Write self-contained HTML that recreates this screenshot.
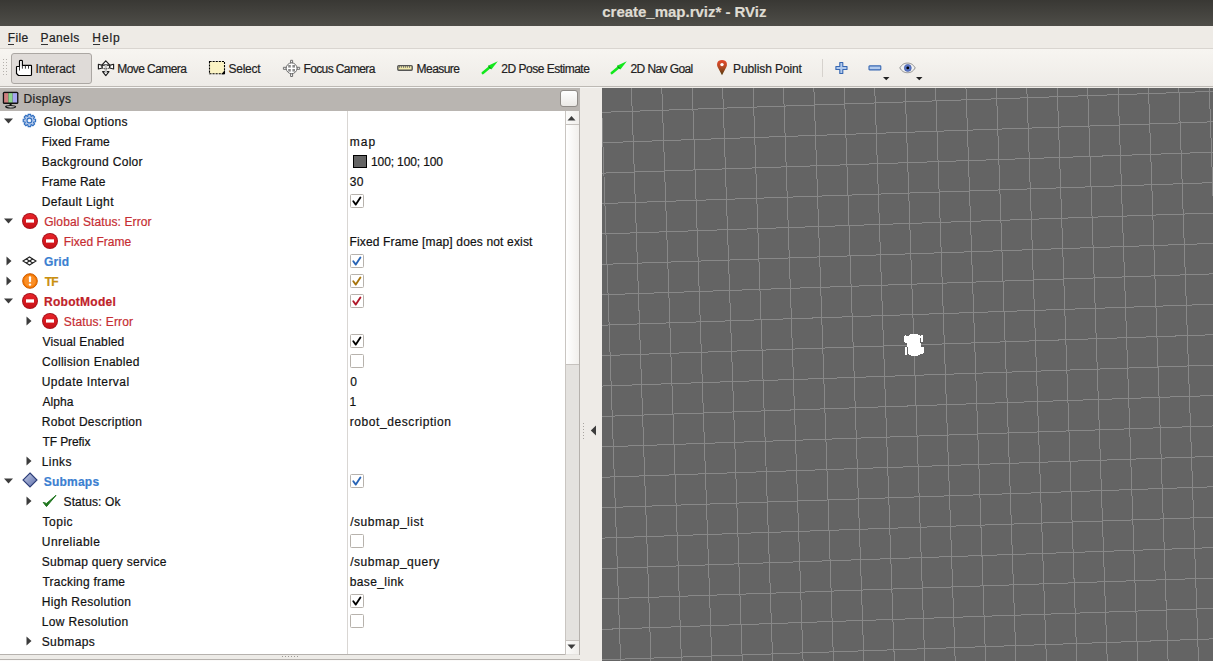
<!DOCTYPE html>
<html><head><meta charset="utf-8"><style>
*{box-sizing:border-box}
html,body{margin:0;padding:0}
body{width:1213px;height:661px;overflow:hidden;position:relative;background:#eeebe7;font-family:"Liberation Sans", sans-serif}
.t{position:absolute;white-space:pre;-webkit-text-stroke:0.2px currentColor}
.a{position:absolute;display:block}
</style></head><body>
<!-- title bar -->
<div class="a" style="left:0;top:0;width:1213px;height:26px;background:linear-gradient(#393834,#4e4d48)"></div>
<!-- menubar -->
<div class="a" style="left:0;top:26px;width:1213px;height:22px;background:#eeebe6"></div>
<div class="a" style="left:0;top:48px;width:1213px;height:1px;background:#d9d5d0"></div>
<div class="a" style="left:8px;top:44px;width:6px;height:1px;background:#333"></div>
<div class="a" style="left:41px;top:44px;width:7px;height:1px;background:#333"></div>
<div class="a" style="left:93px;top:44px;width:7px;height:1px;background:#333"></div>
<!-- toolbar -->
<div class="a" style="left:0;top:49px;width:1213px;height:37px;background:linear-gradient(#f7f5f1,#eeebe7)"></div>
<div class="a" style="left:0;top:86px;width:1213px;height:1px;background:#bdb9b4"></div>
<div class="a" style="left:0;top:87px;width:602px;height:1px;background:#f7f6f4"></div>
<svg class="a" style="left:2px;top:58px" width="6" height="20"><g fill="#b5b1ad"><rect x="1" y="1" width="1" height="1"/><rect x="4" y="1" width="1" height="1"/><rect x="1" y="4" width="1" height="1"/><rect x="4" y="4" width="1" height="1"/><rect x="1" y="7" width="1" height="1"/><rect x="4" y="7" width="1" height="1"/><rect x="1" y="10" width="1" height="1"/><rect x="4" y="10" width="1" height="1"/><rect x="1" y="13" width="1" height="1"/><rect x="4" y="13" width="1" height="1"/><rect x="1" y="16" width="1" height="1"/><rect x="4" y="16" width="1" height="1"/></g></svg>
<div class="a" style="left:11px;top:53px;width:81px;height:31px;background:#dfdbd8;border:1px solid #aba7a3;border-radius:3px"></div>
<svg class="a" style="left:12px;top:56px" width="24" height="24" viewBox="0 0 24 24"><path d="M7.5 10.5V5Q7.5 4.3 8.95 4.3Q10.4 4.3 10.4 5V9.4H19Q19.5 9.4 19.5 10V18.5Q19.5 19.5 18.5 19.5H6.5L4.5 17.5V11Q4.5 10.5 5 10.5Z" fill="#fff" stroke="#000" stroke-width="1.15" stroke-linejoin="round"/><path d="M7.5 10.5V14.5M10.4 9.6V12.7M13.4 9.6V12.7M16.5 9.6V12.7" stroke="#222" stroke-width="0.9"/></svg>
<svg class="a" style="left:94px;top:56px" width="24" height="24" viewBox="0 0 24 24"><g stroke="#1e1e1e" stroke-width="1.15" stroke-linejoin="round"><path d="M11.8 4.8L7.8 9.2H15.8Z" fill="#fff"/><path d="M4.4 8.2L8.2 9.4V12L4.4 13Z" fill="#fff"/><path d="M19.6 8.2L15.6 9.4V12L19.6 13Z" fill="#fff"/><path d="M8.6 15.6H15L11.8 19.6Z" fill="#fff"/></g><rect x="10.7" y="8.2" width="2.2" height="8" fill="#c4c4c4"/><ellipse cx="11.8" cy="10.7" rx="4.4" ry="2.1" fill="none" stroke="#2a2a2a" stroke-width="1" stroke-dasharray="1.3 0.7"/></svg>
<svg class="a" style="left:205px;top:56px" width="24" height="24" viewBox="0 0 24 24"><rect x="4.5" y="5.5" width="15" height="12.3" fill="#fbf3c4"/><rect x="4.5" y="5.5" width="15" height="12.3" fill="none" stroke="#000" stroke-width="1.1" stroke-dasharray="2.1 1"/><path d="M20 14V18.3H16.3Z" fill="#000"/></svg>
<svg class="a" style="left:280px;top:56px" width="24" height="24" viewBox="0 0 24 24"><g stroke="#6e6e6e" stroke-width="1" fill="#fff" stroke-linejoin="round"><path d="M10.6 4.3H12.6V7H10.6Z"/><path d="M10.6 17.6H12.6V20.5H10.6Z"/><path d="M3.4 11.3H6.2V13.3H3.4Z"/><path d="M17 11.3H19.7V13.3H17Z"/><circle cx="11.6" cy="12.3" r="5.4"/></g><g fill="#8a8a8a"><rect x="8.2" y="9" width="2.6" height="2.6"/><rect x="12.4" y="9" width="2.6" height="2.6"/><rect x="8.2" y="13" width="2.6" height="2.6"/><rect x="12.4" y="13" width="2.6" height="2.6"/></g></svg>
<svg class="a" style="left:393px;top:58px" width="24" height="18" viewBox="0 0 24 18"><rect x="4.8" y="7.6" width="14.4" height="4.6" rx="0.9" fill="#f1e9aa" stroke="#555" stroke-width="1.4"/><path d="M6.4 8V9.8M8.4 8V9.8M10.5 8V9.8M12.4 8V9.8M14.4 8V9.8M16.5 8V9.8" stroke="#666" stroke-width="0.9"/></svg>
<svg class="a" style="left:478px;top:56px" width="24" height="24" viewBox="0 0 24 24"><path d="M4.8 17L12 11" stroke="#12e81c" stroke-width="2.6" stroke-linecap="round"/><path d="M19.8 5.2L10 9.8L13.6 13.2Z" fill="#12e81c"/><path d="M10.4 10.2L13.2 12.8" stroke="#0a6a10" stroke-width="1"/></svg>
<svg class="a" style="left:607px;top:56px" width="24" height="24" viewBox="0 0 24 24"><path d="M4.8 17L12 11" stroke="#12e81c" stroke-width="2.6" stroke-linecap="round"/><path d="M19.8 5.2L10 9.8L13.6 13.2Z" fill="#12e81c"/><path d="M10.4 10.2L13.2 12.8" stroke="#0a6a10" stroke-width="1"/></svg>
<svg class="a" style="left:710px;top:56px" width="24" height="24" viewBox="0 0 24 24"><defs><linearGradient id="pg" x1="0" y1="0" x2="0" y2="1"><stop offset="0" stop-color="#e5472a"/><stop offset="0.45" stop-color="#b84a25"/><stop offset="1" stop-color="#4e3a0c"/></linearGradient></defs><path d="M12 19.3L7.6 11C6.5 8.6 6.8 4 12 4S17.5 8.6 16.4 11Z" fill="url(#pg)"/><circle cx="12" cy="8.6" r="1.7" fill="#fff"/></svg>
<svg class="a" style="left:835px;top:61px" width="14" height="14"><path d="M4.8 1.5H7.8V5.5H12V8.5H7.8V12.5H4.8V8.5H0.9V5.5H4.8Z" fill="#b3cbed" stroke="#3767b2" stroke-width="1.1" stroke-linejoin="round"/></svg>
<svg class="a" style="left:868px;top:65px" width="14" height="6"><rect x="1" y="0.9" width="11.8" height="4" rx="0.6" fill="#b3cbed" stroke="#3767b2" stroke-width="1.1"/></svg>
<svg class="a" style="left:883px;top:77px" width="7" height="4"><path d="M0 0H6.5L3.25 3.2Z" fill="#222"/></svg>
<svg class="a" style="left:899px;top:62px" width="17" height="12"><path d="M0.8 5.9C3 2.2 5.5 1.1 8.5 1.1S14 2.2 16.2 5.9C14 9.6 11.5 10.7 8.5 10.7S3 9.6 0.8 5.9Z" fill="#f2f2f2" stroke="#8c8c8c" stroke-width="1"/><circle cx="8.8" cy="5.9" r="3.5" fill="#5b78c8" stroke="#3b55a0" stroke-width="0.6"/><circle cx="8.8" cy="5.9" r="1.4" fill="#000"/></svg>
<svg class="a" style="left:916px;top:77px" width="7" height="4"><path d="M0 0H6.5L3.25 3.2Z" fill="#222"/></svg>
<div class="a" style="left:822px;top:59px;width:1px;height:18px;background:#d6d2cd"></div>
<!-- displays panel -->
<div class="a" style="left:0;top:88px;width:580px;height:23px;background:#b9b5b1"></div>
<div class="a" style="left:560px;top:90px;width:18px;height:17px;border:1px solid #8f8b87;border-radius:3px;background:linear-gradient(#ffffff,#ebe9e6)"></div>
<div class="a" style="left:0;top:111px;width:580px;height:544px;background:#fff"></div>
<div class="a" style="left:347px;top:111px;width:1px;height:543px;background:#d9d6d3"></div>
<div class="a" style="left:0;top:654px;width:580px;height:1px;background:#b6b2ae"></div>
<div class="a" style="left:0;top:655px;width:580px;height:6px;background:#edebe7"></div>
<div class="a" style="left:0;top:659px;width:580px;height:1px;background:#b6b2ae"></div><div class="a" style="left:0;top:660px;width:580px;height:1px;background:#fbfaf9"></div>
<svg class="a" style="left:282px;top:656px" width="16" height="2"><g fill="#9d9995"><rect x="0" y="0" width="1" height="1"/><rect x="3" y="0" width="1" height="1"/><rect x="6" y="0" width="1" height="1"/><rect x="9" y="0" width="1" height="1"/><rect x="12" y="0" width="1" height="1"/><rect x="15" y="0" width="1" height="1"/></g></svg>
<!-- scrollbar -->
<div class="a" style="left:565px;top:111px;width:15px;height:544px;background:#e4e2df;border-left:1px solid #c9c5c1;border-right:1px solid #b5b1ad"></div>
<div class="a" style="left:566px;top:111px;width:13px;height:14px;background:linear-gradient(90deg,#fbfbfa,#f0eeeb);border-bottom:1px solid #c6c2be"></div>
<svg class="a" style="left:567.3px;top:115px" width="9" height="6"><path d="M0.5 5.5H8.5L4.5 1Z" fill="#3c3c3c"/></svg>
<div class="a" style="left:566px;top:125px;width:13px;height:240px;background:linear-gradient(90deg,#ffffff,#f1efec);border-bottom:1px solid #c6c2be"></div>
<div class="a" style="left:566px;top:640px;width:13px;height:14px;background:linear-gradient(90deg,#fbfbfa,#f0eeeb);border-top:1px solid #c6c2be"></div>
<svg class="a" style="left:567.3px;top:644px" width="9" height="6"><path d="M0.5 0.5H8.5L4.5 5Z" fill="#3c3c3c"/></svg>
<!-- splitter -->
<svg class="a" style="left:583px;top:423px" width="2" height="18"><g fill="#a8a4a0"><rect x="0" y="0" width="1" height="1"/><rect x="0" y="3" width="1" height="1"/><rect x="0" y="6" width="1" height="1"/><rect x="0" y="9" width="1" height="1"/><rect x="0" y="12" width="1" height="1"/><rect x="0" y="15" width="1" height="1"/></g></svg>
<svg class="a" style="left:590px;top:425px" width="7" height="11"><path d="M6 0.5V10.5L0.8 5.5Z" fill="#3c3c3c"/></svg>
<!-- monitor icon -->
<svg class="a" style="left:1.5px;top:91px" width="18" height="18"><rect x="0.8" y="0.8" width="15.6" height="12.2" rx="1.5" fill="#111"/><rect x="2.1" y="2.1" width="4.3" height="9.4" fill="#cf7f7f"/><rect x="6.4" y="2.1" width="4.3" height="9.4" fill="#8dd48d"/><rect x="10.7" y="2.1" width="4.4" height="9.4" fill="#a6a6f0"/><rect x="7.6" y="12.8" width="2" height="2" fill="#111"/><ellipse cx="8.6" cy="15.8" rx="5" ry="1.2" fill="#fff" stroke="#111" stroke-width="1.1"/></svg>
<span class="t" style="left:602.27px;top:4.30px;font-size:15px;line-height:15px;color:#dfdbd2;font-weight:700;letter-spacing:-0.016px">create_map.rviz* - RViz</span>
<span class="t" style="left:7.68px;top:31.54px;font-size:12px;line-height:12px;color:#222;letter-spacing:0.415px">File</span>
<span class="t" style="left:40.46px;top:31.54px;font-size:12px;line-height:12px;color:#222;letter-spacing:0.423px">Panels</span>
<span class="t" style="left:92.29px;top:31.54px;font-size:12px;line-height:12px;color:#222;letter-spacing:0.942px">Help</span>
<span class="t" style="left:35.47px;top:62.74px;font-size:12px;line-height:12px;color:#222;letter-spacing:-0.063px">Interact</span>
<span class="t" style="left:117.27px;top:62.74px;font-size:12px;line-height:12px;color:#222;letter-spacing:-0.570px">Move Camera</span>
<span class="t" style="left:228.58px;top:62.74px;font-size:12px;line-height:12px;color:#222;letter-spacing:-0.273px">Select</span>
<span class="t" style="left:303.45px;top:62.74px;font-size:12px;line-height:12px;color:#222;letter-spacing:-0.611px">Focus Camera</span>
<span class="t" style="left:416.58px;top:62.74px;font-size:12px;line-height:12px;color:#222;letter-spacing:-0.561px">Measure</span>
<span class="t" style="left:501.32px;top:62.74px;font-size:12px;line-height:12px;color:#222;letter-spacing:-0.499px">2D Pose Estimate</span>
<span class="t" style="left:630.54px;top:62.74px;font-size:12px;line-height:12px;color:#222;letter-spacing:-0.597px">2D Nav Goal</span>
<span class="t" style="left:733.01px;top:62.74px;font-size:12px;line-height:12px;color:#222;letter-spacing:-0.091px">Publish Point</span>
<span class="t" style="left:23.59px;top:93.14px;font-size:12px;line-height:12px;color:#222;letter-spacing:0.287px">Displays</span>
<span class="t" style="left:43.87px;top:115.64px;font-size:12px;line-height:12px;color:#111111;letter-spacing:0.328px">Global Options</span>
<span class="t" style="left:41.70px;top:135.64px;font-size:12px;line-height:12px;color:#111111;letter-spacing:0.064px">Fixed Frame</span>
<span class="t" style="left:41.70px;top:155.64px;font-size:12px;line-height:12px;color:#111111;letter-spacing:0.325px">Background Color</span>
<span class="t" style="left:41.70px;top:175.64px;font-size:12px;line-height:12px;color:#111111;letter-spacing:0.031px">Frame Rate</span>
<span class="t" style="left:41.70px;top:195.64px;font-size:12px;line-height:12px;color:#111111;letter-spacing:0.367px">Default Light</span>
<span class="t" style="left:44.13px;top:215.64px;font-size:12px;line-height:12px;color:#c62d32;letter-spacing:0.111px">Global Status: Error</span>
<span class="t" style="left:63.68px;top:235.64px;font-size:12px;line-height:12px;color:#c62d32;letter-spacing:0.010px">Fixed Frame</span>
<span class="t" style="left:44.03px;top:255.64px;font-size:12px;line-height:12px;color:#3b7fd1;font-weight:700;letter-spacing:0.097px">Grid</span>
<span class="t" style="left:44.70px;top:275.64px;font-size:12px;line-height:12px;color:#c98f10;font-weight:700;letter-spacing:-0.698px">TF</span>
<span class="t" style="left:44.02px;top:295.64px;font-size:12px;line-height:12px;color:#bf2228;font-weight:700;letter-spacing:0.282px">RobotModel</span>
<span class="t" style="left:63.82px;top:315.64px;font-size:12px;line-height:12px;color:#c62d32;letter-spacing:0.153px">Status: Error</span>
<span class="t" style="left:42.50px;top:335.64px;font-size:12px;line-height:12px;color:#111111;letter-spacing:0.142px">Visual Enabled</span>
<span class="t" style="left:42.01px;top:355.64px;font-size:12px;line-height:12px;color:#111111;letter-spacing:0.295px">Collision Enabled</span>
<span class="t" style="left:41.79px;top:375.64px;font-size:12px;line-height:12px;color:#111111;letter-spacing:0.421px">Update Interval</span>
<span class="t" style="left:42.46px;top:395.64px;font-size:12px;line-height:12px;color:#111111;letter-spacing:0.095px">Alpha</span>
<span class="t" style="left:41.70px;top:415.64px;font-size:12px;line-height:12px;color:#111111;letter-spacing:0.309px">Robot Description</span>
<span class="t" style="left:42.41px;top:435.64px;font-size:12px;line-height:12px;color:#111111;letter-spacing:-0.080px">TF Prefix</span>
<span class="t" style="left:41.70px;top:455.64px;font-size:12px;line-height:12px;color:#111111;letter-spacing:0.444px">Links</span>
<span class="t" style="left:43.84px;top:475.64px;font-size:12px;line-height:12px;color:#3b7fd1;font-weight:700;letter-spacing:0.206px">Submaps</span>
<span class="t" style="left:63.55px;top:495.64px;font-size:12px;line-height:12px;color:#111111;letter-spacing:0.093px">Status: Ok</span>
<span class="t" style="left:42.41px;top:515.64px;font-size:12px;line-height:12px;color:#111111;letter-spacing:0.544px">Topic</span>
<span class="t" style="left:41.79px;top:535.64px;font-size:12px;line-height:12px;color:#111111;letter-spacing:0.446px">Unreliable</span>
<span class="t" style="left:41.73px;top:555.64px;font-size:12px;line-height:12px;color:#111111;letter-spacing:0.279px">Submap query service</span>
<span class="t" style="left:42.41px;top:575.64px;font-size:12px;line-height:12px;color:#111111;letter-spacing:0.235px">Tracking frame</span>
<span class="t" style="left:41.70px;top:595.64px;font-size:12px;line-height:12px;color:#111111;letter-spacing:0.319px">High Resolution</span>
<span class="t" style="left:41.70px;top:615.64px;font-size:12px;line-height:12px;color:#111111;letter-spacing:0.349px">Low Resolution</span>
<span class="t" style="left:41.73px;top:635.64px;font-size:12px;line-height:12px;color:#111111;letter-spacing:0.394px">Submaps</span>
<span class="t" style="left:349.64px;top:135.64px;font-size:12px;line-height:12px;color:#111111;letter-spacing:1.072px">map</span>
<span class="t" style="left:371.07px;top:155.64px;font-size:12px;line-height:12px;color:#111111;letter-spacing:-0.128px">100; 100; 100</span>
<span class="t" style="left:349.86px;top:175.64px;font-size:12px;line-height:12px;color:#111111;letter-spacing:0.285px">30</span>
<span class="t" style="left:349.44px;top:235.64px;font-size:12px;line-height:12px;color:#111111;letter-spacing:0.158px">Fixed Frame [map] does not exist</span>
<span class="t" style="left:350.13px;top:375.64px;font-size:12px;line-height:12px;color:#111111">0</span>
<span class="t" style="left:349.58px;top:395.64px;font-size:12px;line-height:12px;color:#111111">1</span>
<span class="t" style="left:349.71px;top:415.64px;font-size:12px;line-height:12px;color:#111111;letter-spacing:0.580px">robot_description</span>
<span class="t" style="left:350.20px;top:515.64px;font-size:12px;line-height:12px;color:#111111;letter-spacing:0.525px">/submap_list</span>
<span class="t" style="left:350.20px;top:555.64px;font-size:12px;line-height:12px;color:#111111;letter-spacing:0.528px">/submap_query</span>
<span class="t" style="left:349.73px;top:575.64px;font-size:12px;line-height:12px;color:#111111;letter-spacing:0.389px">base_link</span>
<svg class="a" style="left:4px;top:118px" width="10" height="6"><path d="M0 0.5H9L4.5 5.6Z" fill="#3c3c3c"/></svg>
<svg class="a" style="left:4px;top:218px" width="10" height="6"><path d="M0 0.5H9L4.5 5.6Z" fill="#3c3c3c"/></svg>
<svg class="a" style="left:4px;top:298px" width="10" height="6"><path d="M0 0.5H9L4.5 5.6Z" fill="#3c3c3c"/></svg>
<svg class="a" style="left:4px;top:478px" width="10" height="6"><path d="M0 0.5H9L4.5 5.6Z" fill="#3c3c3c"/></svg>
<svg class="a" style="left:6px;top:256px" width="6" height="10"><path d="M0.5 0.5V9.5L5.5 5Z" fill="#3c3c3c"/></svg>
<svg class="a" style="left:6px;top:276px" width="6" height="10"><path d="M0.5 0.5V9.5L5.5 5Z" fill="#3c3c3c"/></svg>
<svg class="a" style="left:26px;top:316px" width="6" height="10"><path d="M0.5 0.5V9.5L5.5 5Z" fill="#3c3c3c"/></svg>
<svg class="a" style="left:26px;top:456px" width="6" height="10"><path d="M0.5 0.5V9.5L5.5 5Z" fill="#3c3c3c"/></svg>
<svg class="a" style="left:26px;top:496px" width="6" height="10"><path d="M0.5 0.5V9.5L5.5 5Z" fill="#3c3c3c"/></svg>
<svg class="a" style="left:26px;top:636px" width="6" height="10"><path d="M0.5 0.5V9.5L5.5 5Z" fill="#3c3c3c"/></svg>
<svg class="a" style="left:22px;top:113px" width="15" height="15" viewBox="0 0 15 15"><polygon points="5.87,3.06 6.20,1.32 8.60,1.32 8.93,3.06 9.46,3.28 10.92,2.28 12.62,3.98 11.62,5.44 11.84,5.97 13.58,6.30 13.58,8.70 11.84,9.03 11.62,9.56 12.62,11.02 10.92,12.72 9.46,11.72 8.93,11.94 8.60,13.68 6.20,13.68 5.87,11.94 5.34,11.72 3.88,12.72 2.18,11.02 3.18,9.56 2.96,9.03 1.22,8.70 1.22,6.30 2.96,5.97 3.18,5.44 2.18,3.98 3.88,2.28 5.34,3.28" fill="#b4c9ea" stroke="#2f6ec0" stroke-width="1.15" stroke-linejoin="miter"/><circle cx="7.4" cy="7.5" r="2.4" fill="#dfe8f6" stroke="#2f6ec0" stroke-width="1.1"/><circle cx="7.4" cy="7.5" r="1" fill="#fff"/></svg>
<svg class="a" style="left:22px;top:213px" width="16" height="16"><defs><linearGradient id="eg" x1="0" y1="0" x2="0" y2="1"><stop offset="0" stop-color="#e8242a"/><stop offset="1" stop-color="#c70f16"/></linearGradient></defs><circle cx="8" cy="8" r="8" fill="#a8121a"/><circle cx="8" cy="8" r="7" fill="url(#eg)"/><rect x="4" y="6.3" width="8" height="3.3" fill="#fff"/></svg>
<svg class="a" style="left:42px;top:233px" width="16" height="16"><defs><linearGradient id="eg" x1="0" y1="0" x2="0" y2="1"><stop offset="0" stop-color="#e8242a"/><stop offset="1" stop-color="#c70f16"/></linearGradient></defs><circle cx="8" cy="8" r="8" fill="#a8121a"/><circle cx="8" cy="8" r="7" fill="url(#eg)"/><rect x="4" y="6.3" width="8" height="3.3" fill="#fff"/></svg>
<svg class="a" style="left:22px;top:293px" width="16" height="16"><defs><linearGradient id="eg" x1="0" y1="0" x2="0" y2="1"><stop offset="0" stop-color="#e8242a"/><stop offset="1" stop-color="#c70f16"/></linearGradient></defs><circle cx="8" cy="8" r="8" fill="#a8121a"/><circle cx="8" cy="8" r="7" fill="url(#eg)"/><rect x="4" y="6.3" width="8" height="3.3" fill="#fff"/></svg>
<svg class="a" style="left:42px;top:313px" width="16" height="16"><defs><linearGradient id="eg" x1="0" y1="0" x2="0" y2="1"><stop offset="0" stop-color="#e8242a"/><stop offset="1" stop-color="#c70f16"/></linearGradient></defs><circle cx="8" cy="8" r="8" fill="#a8121a"/><circle cx="8" cy="8" r="7" fill="url(#eg)"/><rect x="4" y="6.3" width="8" height="3.3" fill="#fff"/></svg>
<svg class="a" style="left:22px;top:256px" width="15" height="10"><g fill="none" stroke="#222" stroke-width="1.1"><path d="M1 5L7.5 1L14 5L7.5 9Z"/><path d="M4.2 3L10.8 7M10.8 3L4.2 7"/></g></svg>
<svg class="a" style="left:22px;top:273px" width="16" height="16"><circle cx="8" cy="8" r="7.3" fill="#f57900" stroke="#ce5c00" stroke-width="1"/><circle cx="8" cy="8" r="5.8" fill="#fa8e26"/><rect x="6.9" y="3.2" width="2.2" height="6" rx="1" fill="#fff"/><circle cx="8" cy="11.6" r="1.2" fill="#fff"/></svg>
<svg class="a" style="left:21.5px;top:472px" width="16" height="16"><defs><linearGradient id="dg" x1="0" y1="0" x2="1" y2="1"><stop offset="0" stop-color="#c9d0e6"/><stop offset="0.5" stop-color="#8f9cc8"/><stop offset="1" stop-color="#5d6ea8"/></linearGradient></defs><path d="M8 1L15 8L8 15L1 8Z" fill="url(#dg)" stroke="#2c3d78" stroke-width="1.1"/></svg>
<svg class="a" style="left:42px;top:494px" width="15" height="14"><path d="M1.2 8.4L4.5 12.6L14 1.3L4.6 9.4Z" fill="#1d741c" stroke="#1d741c" stroke-width="1.0" stroke-linejoin="round"/></svg>
<svg class="a" style="left:350px;top:194px" width="14" height="14"><rect x="0.5" y="0.5" width="13" height="13" rx="1" fill="#fff" stroke="#b7b2ac"/><path d="M3.3 7.3L5.8 10.6L10.4 3.6" fill="none" stroke="#000" stroke-width="1.9" stroke-linecap="round" stroke-linejoin="round"/></svg>
<svg class="a" style="left:350px;top:254px" width="14" height="14"><rect x="0.5" y="0.5" width="13" height="13" rx="1" fill="#fff" stroke="#b7b2ac"/><path d="M3.3 7.3L5.8 10.6L10.4 3.6" fill="none" stroke="#2864b6" stroke-width="1.9" stroke-linecap="round" stroke-linejoin="round"/></svg>
<svg class="a" style="left:350px;top:274px" width="14" height="14"><rect x="0.5" y="0.5" width="13" height="13" rx="1" fill="#fff" stroke="#b7b2ac"/><path d="M3.3 7.3L5.8 10.6L10.4 3.6" fill="none" stroke="#a8740c" stroke-width="1.9" stroke-linecap="round" stroke-linejoin="round"/></svg>
<svg class="a" style="left:350px;top:294px" width="14" height="14"><rect x="0.5" y="0.5" width="13" height="13" rx="1" fill="#fff" stroke="#b7b2ac"/><path d="M3.3 7.3L5.8 10.6L10.4 3.6" fill="none" stroke="#b0182a" stroke-width="1.9" stroke-linecap="round" stroke-linejoin="round"/></svg>
<svg class="a" style="left:350px;top:334px" width="14" height="14"><rect x="0.5" y="0.5" width="13" height="13" rx="1" fill="#fff" stroke="#b7b2ac"/><path d="M3.3 7.3L5.8 10.6L10.4 3.6" fill="none" stroke="#000" stroke-width="1.9" stroke-linecap="round" stroke-linejoin="round"/></svg>
<svg class="a" style="left:350px;top:354px" width="14" height="14"><rect x="0.5" y="0.5" width="13" height="13" rx="1" fill="#fff" stroke="#b7b2ac"/></svg>
<svg class="a" style="left:350px;top:474px" width="14" height="14"><rect x="0.5" y="0.5" width="13" height="13" rx="1" fill="#fff" stroke="#b7b2ac"/><path d="M3.3 7.3L5.8 10.6L10.4 3.6" fill="none" stroke="#2864b6" stroke-width="1.9" stroke-linecap="round" stroke-linejoin="round"/></svg>
<svg class="a" style="left:350px;top:534px" width="14" height="14"><rect x="0.5" y="0.5" width="13" height="13" rx="1" fill="#fff" stroke="#b7b2ac"/></svg>
<svg class="a" style="left:350px;top:594px" width="14" height="14"><rect x="0.5" y="0.5" width="13" height="13" rx="1" fill="#fff" stroke="#b7b2ac"/><path d="M3.3 7.3L5.8 10.6L10.4 3.6" fill="none" stroke="#000" stroke-width="1.9" stroke-linecap="round" stroke-linejoin="round"/></svg>
<svg class="a" style="left:350px;top:614px" width="14" height="14"><rect x="0.5" y="0.5" width="13" height="13" rx="1" fill="#fff" stroke="#b7b2ac"/></svg>
<div class="a" style="left:353px;top:154.5px;width:14px;height:13.5px;background:#646464;border:1.5px solid #000"></div>
<!-- 3D view -->
<svg class="a" style="left:602px;top:88px;background:#646464" width="611" height="573" shape-rendering="crispEdges">
<g stroke="#888888" stroke-width="1">
<line x1="-31.44" y1="0" x2="-11.83" y2="573"/>
<line x1="-1.02" y1="0" x2="18.59" y2="573"/>
<line x1="29.40" y1="0" x2="49.00" y2="573"/>
<line x1="59.81" y1="0" x2="79.42" y2="573"/>
<line x1="90.23" y1="0" x2="109.84" y2="573"/>
<line x1="120.64" y1="0" x2="140.25" y2="573"/>
<line x1="151.06" y1="0" x2="170.67" y2="573"/>
<line x1="181.47" y1="0" x2="201.09" y2="573"/>
<line x1="211.89" y1="0" x2="231.50" y2="573"/>
<line x1="242.31" y1="0" x2="261.92" y2="573"/>
<line x1="272.72" y1="0" x2="292.33" y2="573"/>
<line x1="303.14" y1="0" x2="322.75" y2="573"/>
<line x1="333.55" y1="0" x2="353.17" y2="573"/>
<line x1="363.97" y1="0" x2="383.58" y2="573"/>
<line x1="394.39" y1="0" x2="414.00" y2="573"/>
<line x1="424.80" y1="0" x2="444.42" y2="573"/>
<line x1="455.22" y1="0" x2="474.83" y2="573"/>
<line x1="485.63" y1="0" x2="505.25" y2="573"/>
<line x1="516.05" y1="0" x2="535.67" y2="573"/>
<line x1="546.47" y1="0" x2="566.08" y2="573"/>
<line x1="576.88" y1="0" x2="596.50" y2="573"/>
<line x1="607.30" y1="0" x2="626.92" y2="573"/>
<line x1="637.71" y1="0" x2="657.33" y2="573"/>
<line x1="0" y1="-36.53" x2="611" y2="-57.43"/>
<line x1="0" y1="-6.11" x2="611" y2="-27.02"/>
<line x1="0" y1="24.30" x2="611" y2="3.40"/>
<line x1="0" y1="54.72" x2="611" y2="33.81"/>
<line x1="0" y1="85.13" x2="611" y2="64.23"/>
<line x1="0" y1="115.55" x2="611" y2="94.64"/>
<line x1="0" y1="145.96" x2="611" y2="125.06"/>
<line x1="0" y1="176.38" x2="611" y2="155.47"/>
<line x1="0" y1="206.80" x2="611" y2="185.89"/>
<line x1="0" y1="237.21" x2="611" y2="216.30"/>
<line x1="0" y1="267.63" x2="611" y2="246.72"/>
<line x1="0" y1="298.04" x2="611" y2="277.13"/>
<line x1="0" y1="328.46" x2="611" y2="307.55"/>
<line x1="0" y1="358.88" x2="611" y2="337.96"/>
<line x1="0" y1="389.29" x2="611" y2="368.38"/>
<line x1="0" y1="419.71" x2="611" y2="398.79"/>
<line x1="0" y1="450.12" x2="611" y2="429.21"/>
<line x1="0" y1="480.54" x2="611" y2="459.62"/>
<line x1="0" y1="510.95" x2="611" y2="490.04"/>
<line x1="0" y1="541.37" x2="611" y2="520.45"/>
<line x1="0" y1="571.79" x2="611" y2="550.87"/>
<line x1="0" y1="602.20" x2="611" y2="581.28"/>
</g>
<g fill="#fff"><rect x="308" y="246" width="8" height="1"/><rect x="303" y="247" width="1" height="1"/><rect x="307" y="247" width="11" height="1"/><rect x="319" y="247" width="2" height="1"/><rect x="302" y="248" width="19" height="2"/><rect x="302" y="250" width="16" height="4"/><rect x="319" y="250" width="2" height="4"/><rect x="303" y="254" width="15" height="1"/><rect x="305" y="255" width="14" height="4"/><rect x="306" y="259" width="13" height="6"/><rect x="319" y="259" width="3" height="6"/><rect x="303" y="259" width="2" height="8"/><rect x="306" y="265" width="13" height="1"/><rect x="319" y="265" width="2" height="1"/><rect x="307" y="266" width="11" height="1"/><rect x="309" y="267" width="7" height="1"/></g>
</svg>
</body></html>
